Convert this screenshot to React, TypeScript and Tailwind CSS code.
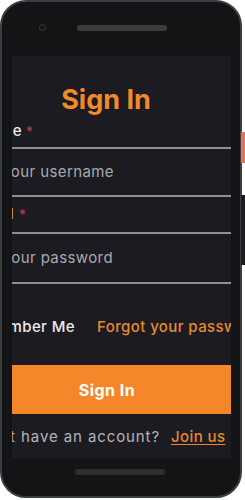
import React from "react";

const font = { fontFamily: "Inter, 'Noto Sans', sans-serif" };

const Line = () => <div className="h-[2px] w-full bg-[#8f8f97]" />;

// the form is wider than the phone screen, so text is pinned by where it ends
const EndAt = ({ x, children }: { x: number; children: React.ReactNode }) => (
  <div className="flex shrink-0 justify-end whitespace-nowrap" style={{ width: x }}>
    {children}
  </div>
);

const App = () => {
  return (
    <div className="relative h-[500px] w-[245px] overflow-hidden bg-white" style={font}>
      {/* side buttons */}
      <div className="absolute right-0 top-[132px] h-[31px] w-[4px] bg-[#e0745e]" />
      <div className="absolute right-0 top-[195px] h-[70px] w-[4px] bg-[#1b1c1d]" />

      <div className="flex h-[498px] w-[242px] flex-col rounded-[26px] border-2 border-[#3b3e40] bg-[#131415]">
        {/* top bezel */}
        <div className="flex h-[54px] items-center">
          <div className="ml-[37px] mt-[-4px] h-[7px] w-[7px] rounded-full border border-[#3a3c3e]" />
          <div className="ml-[31px] mt-[-2px] h-[6px] w-[90px] rounded-full bg-[#3a3c3e]" />
        </div>

        {/* screen */}
        <div className="ml-[10px] h-[402px] w-[219px] overflow-hidden bg-[#1c1b21] tracking-[0.4px]">
          <div className="mt-[29px] flex h-[30px] items-center justify-center pr-[31px]">
            <span className="whitespace-nowrap text-[27px] font-bold tracking-normal text-[#f28a2c]">Sign In</span>
          </div>

          <div className="mt-[5px] flex h-[22px] items-center">
            <EndAt x={10}>
              <span className="text-[15px] font-medium text-[#ececef]">Username</span>
            </EndAt>
            <span className="ml-[4px] text-[14px] text-[#c23a5c]">*</span>
          </div>
          <div className="mt-[5px]"><Line /></div>

          <div className="flex h-[46px] items-center">
            <EndAt x={102}>
              <span className="text-[15px] text-[#a9a9b1]">Enter your username</span>
            </EndAt>
          </div>
          <Line />

          <div className="flex h-[35px] items-center">
            <EndAt x={2}>
              <span className="text-[15px] font-medium text-[#ececef]">Password</span>
            </EndAt>
            <span className="ml-[5px] text-[14px] text-[#c23a5c]">*</span>
          </div>
          <Line />

          <div className="flex h-[48px] items-center">
            <EndAt x={101}>
              <span className="text-[15px] text-[#a9a9b1]">Enter your password</span>
            </EndAt>
          </div>
          <Line />

          <div className="mt-[32px] flex h-[22px] items-center whitespace-nowrap">
            <EndAt x={63}>
              <span className="text-[15px] font-medium text-[#ececef]">Remember Me</span>
            </EndAt>
            <span className="ml-[22px] text-[15px] font-medium text-[#e8892f]">Forgot your password?</span>
          </div>

          <div className="mt-[27px] flex h-[49px] items-center justify-center bg-[#f5872b] pr-[29px]">
            <span className="text-[16px] font-bold tracking-[0.5px] text-white">Sign In</span>
          </div>

          <div className="mt-[12px] flex h-[22px] items-center whitespace-nowrap">
            <EndAt x={148}>
              <span className="text-[15px] tracking-[0.9px] text-[#b4b4bc]">Don't have an account?</span>
            </EndAt>
            <span className="ml-[11px] text-[15px] font-medium text-[#e8892f] underline underline-offset-2">Join us</span>
          </div>
        </div>

        {/* bottom bezel */}
        <div className="flex flex-1 items-center justify-center">
          <div className="ml-[-2px] mt-[-10px] h-[6px] w-[90px] rounded-full bg-[#2c2e30]" />
        </div>
      </div>
    </div>
  );
};

export default App;
